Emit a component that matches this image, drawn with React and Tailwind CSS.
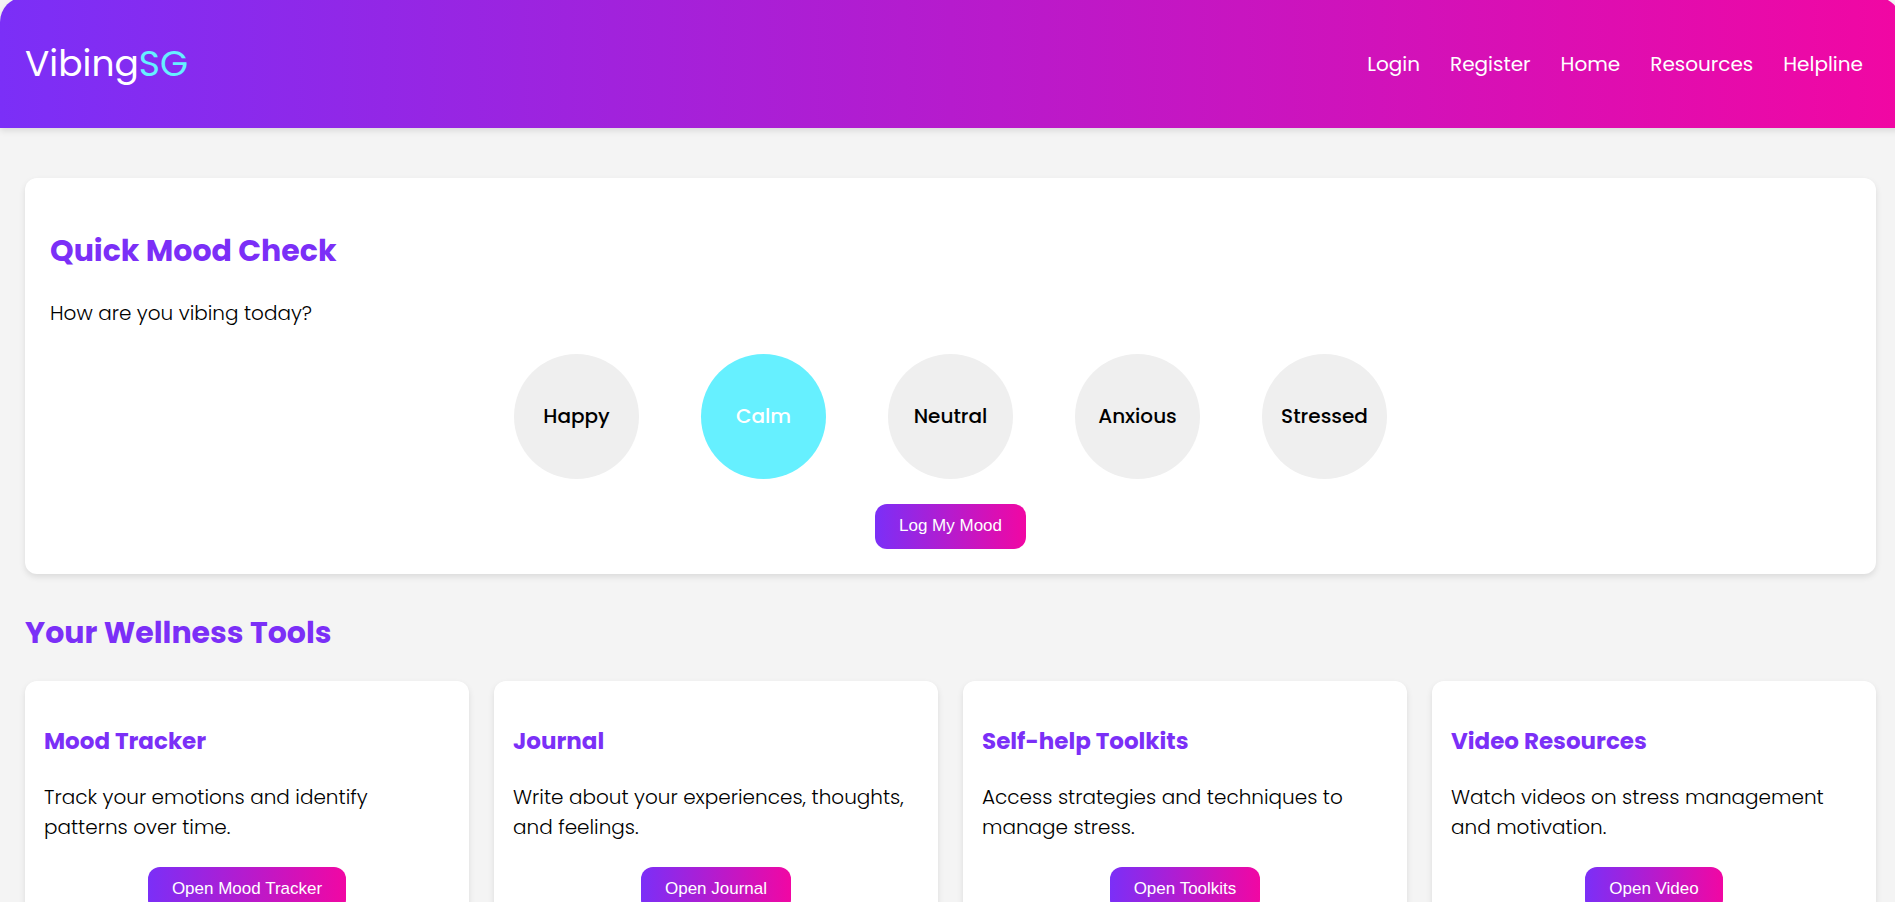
import { useState } from "react";

const navLinks = ["Login", "Register", "Home", "Resources", "Helpline"];

const moods = ["Happy", "Calm", "Neutral", "Anxious", "Stressed"];

const tools = [
  {
    title: "Mood Tracker",
    text: "Track your emotions and identify patterns over time.",
    action: "Open Mood Tracker",
  },
  {
    title: "Journal",
    text: "Write about your experiences, thoughts, and feelings.",
    action: "Open Journal",
  },
  {
    title: "Self-help Toolkits",
    text: "Access strategies and techniques to manage stress.",
    action: "Open Toolkits",
  },
  {
    title: "Video Resources",
    text: "Watch videos on stress management and motivation.",
    action: "Open Video",
  },
];

function GradientButton({ children }) {
  return (
    <button
      type="button"
      className="mx-auto block h-[45px] rounded-xl bg-linear-[90deg,#7b2ff7,#f107a3] px-6 pb-0.5 font-['Liberation_Sans',Arial,sans-serif] text-[17px] text-white"
    >
      {children}
    </button>
  );
}

function Header() {
  return (
    <header className="-mt-[3px] flex items-center justify-between rounded-t-[25px] bg-linear-[90deg,#7b2ff7,#f107a3] pt-10 pr-[38px] pb-[37px] pl-[25px] text-white shadow-[0_3px_6px_rgba(0,0,0,0.1)]">
      <p className="text-4xl leading-[54px]">
        Vibing<span className="text-[#66f0ff]">SG</span>
      </p>
      <nav className="flex gap-[30px] text-xl">
        {navLinks.map((label) => (
          <a key={label} href={`#${label.toLowerCase()}`}>
            {label}
          </a>
        ))}
      </nav>
    </header>
  );
}

function MoodCheck() {
  const [selected, setSelected] = useState("Calm");
  return (
    <section className="mt-[50px] rounded-xl bg-white px-[25px] pt-[50px] pb-[25px] shadow-[0_3px_6px_rgba(0,0,0,0.1)]">
      <h2 className="text-3xl leading-[45px] font-bold text-[#7b2ff7]">Quick Mood Check</h2>
      <p className="mt-[25px] text-xl leading-[30px] font-light">How are you vibing today?</p>
      <div className="mt-[26px] flex flex-wrap justify-center gap-x-[62px] gap-y-6">
        {moods.map((mood) => (
          <button
            key={mood}
            type="button"
            aria-pressed={mood === selected}
            onClick={() => setSelected(mood)}
            className={
              mood === selected
                ? "size-[125px] rounded-full bg-[#66f0ff] pb-0.5 text-xl font-medium text-white"
                : "size-[125px] rounded-full bg-[#efefef] pb-0.5 text-xl font-medium text-black"
            }
          >
            {mood}
          </button>
        ))}
      </div>
      <div className="mt-[25px]">
        <GradientButton>Log My Mood</GradientButton>
      </div>
    </section>
  );
}

function ToolCard({ title, text, action }) {
  return (
    <article className="rounded-xl bg-white px-[19px] pt-[42px] pb-[25px] shadow-[0_3px_6px_rgba(0,0,0,0.1)]">
      <h3 className="text-[23px] leading-9 font-bold text-[#7b2ff7]">{title}</h3>
      <p className="mt-[23px] mb-[25px] text-xl leading-[30px] font-light">{text}</p>
      <GradientButton>{action}</GradientButton>
    </article>
  );
}

export default function App() {
  return (
    <div className="flow-root min-h-screen overflow-x-clip bg-[#f4f4f4] pb-[25px] font-['Poppins','Inter',sans-serif] text-black">
      <div className="-mr-1.5">
        <Header />
        <main className="px-[25px]">
          <MoodCheck />
          <section className="mt-9">
            <h2 className="text-3xl leading-[45px] font-bold text-[#7b2ff7]">
              Your Wellness Tools
            </h2>
            <div className="mt-[26px] grid grid-cols-[repeat(auto-fit,minmax(350px,1fr))] gap-[25px]">
              {tools.map((tool) => (
                <ToolCard key={tool.title} {...tool} />
              ))}
            </div>
          </section>
        </main>
      </div>
    </div>
  );
}
